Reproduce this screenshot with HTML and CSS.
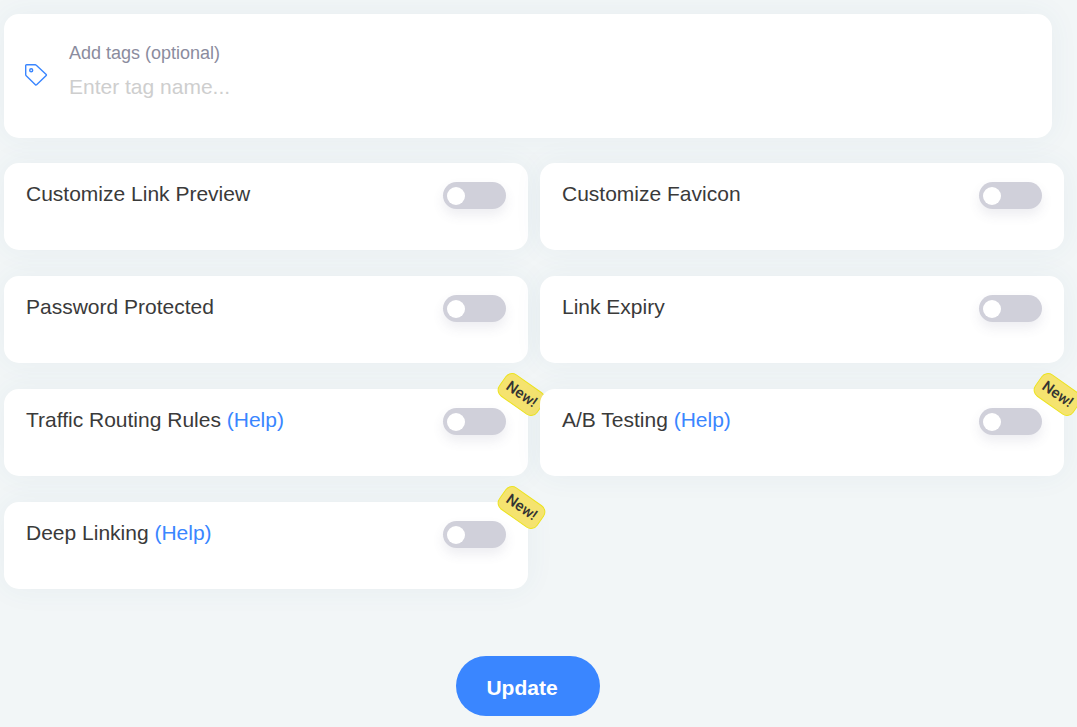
FILE: index.html
```html
<!DOCTYPE html>
<html lang="en">
<head>
<meta charset="utf-8">
<meta name="viewport" content="width=device-width, initial-scale=1">
<title>Link settings</title>
<link rel="stylesheet" href="styles.css">
</head>
<body>
<form class="settings">
  <div class="card tags">
    <svg class="tags-icon" viewBox="0 0 24 24" aria-hidden="true">
      <path d="M2.6 1.7H11.2Q11.8 1.7 12.3 2.2L22.2 11.4Q22.7 12 22.2 12.6L12.6 21.8Q12 22.4 11.4 21.8L2.2 12.8Q1.7 12.3 1.7 11.6V2.6Q1.7 1.7 2.6 1.7Z"/>
      <circle cx="7.2" cy="7.2" r="1.5"/>
    </svg>
    <div class="tags-field">
      <label class="tags-label" for="tags">Add tags (optional)</label>
      <input class="tags-input" id="tags" type="text" placeholder="Enter tag name...">
    </div>
  </div>

  <div class="options">
    <div class="card option">
      <label class="option-label" for="preview">Customize Link Preview</label>
      <input class="switch" id="preview" type="checkbox">
    </div>
    <div class="card option">
      <label class="option-label" for="favicon">Customize Favicon</label>
      <input class="switch" id="favicon" type="checkbox">
    </div>
    <div class="card option">
      <label class="option-label" for="password">Password Protected</label>
      <input class="switch" id="password" type="checkbox">
    </div>
    <div class="card option">
      <label class="option-label" for="expiry">Link Expiry</label>
      <input class="switch" id="expiry" type="checkbox">
    </div>
    <div class="card option">
      <div class="option-label"><label for="routing">Traffic Routing Rules</label> <a class="help" href="#routing">(Help)</a></div>
      <input class="switch" id="routing" type="checkbox">
      <span class="badge">New!</span>
    </div>
    <div class="card option">
      <div class="option-label"><label for="testing">A/B Testing</label> <a class="help" href="#testing">(Help)</a></div>
      <input class="switch" id="testing" type="checkbox">
      <span class="badge">New!</span>
    </div>
    <div class="card option">
      <div class="option-label"><label for="deep">Deep Linking</label> <a class="help" href="#deep">(Help)</a></div>
      <input class="switch" id="deep" type="checkbox">
      <span class="badge">New!</span>
    </div>
  </div>

  <button class="update" type="submit">Update</button>
</form>
</body>
</html>
```

FILE: styles.css
```css
* {
  box-sizing: border-box;
}

body {
  margin: 0;
  overflow-x: hidden;
  background: #f2f6f7;
  color: #3a3a3a;
  font: 21px/24px "Liberation Sans", Arial, sans-serif;
}

.settings {
  display: flex;
  flex-direction: column;
  padding: 14px 13px 11px 4px;
}

.card {
  position: relative;
  border-radius: 15px;
  background: #fff;
  box-shadow: 0 0 30px rgba(50, 100, 140, 0.06);
}

.tags {
  display: flex;
  align-items: center;
  gap: 21px;
  margin: 0 12px 25px 0;
  padding: 28px 20px 36px;
}

.tags-icon {
  flex: none;
  width: 24px;
  height: 24px;
  margin-top: 6px;
  fill: none;
  stroke: #3a86ff;
  stroke-width: 1.4;
}

.tags-field {
  display: flex;
  flex: 1;
  flex-direction: column;
  gap: 8px;
}

.tags-label {
  color: #8b8c9e;
  font-size: 18px;
  line-height: 22px;
}

.tags-input {
  width: 100%;
  height: 30px;
  padding: 0;
  border: 0;
  outline: 0;
  background: none;
  color: inherit;
  font: inherit;
}

.tags-input::placeholder {
  color: #cecece;
  opacity: 1;
}

.options {
  display: grid;
  grid-template-columns: 1fr 1fr;
  gap: 26px 12px;
}

.option {
  display: flex;
  align-items: flex-start;
  justify-content: space-between;
  min-height: 87px;
  padding: 19px 22px;
}

.help {
  color: #3a86ff;
  text-decoration: none;
}

.switch {
  position: relative;
  flex: none;
  width: 63px;
  height: 27px;
  margin: 0;
  border-radius: 14px;
  appearance: none;
  background: #d0d0da;
  box-shadow: 0 6px 12px rgba(80, 80, 120, 0.1);
  cursor: pointer;
}

.switch::before {
  content: "";
  position: absolute;
  top: 5px;
  left: 4px;
  width: 18px;
  height: 18px;
  border-radius: 50%;
  background: #fff;
}

.switch:checked {
  background: #3a86ff;
}

.switch:checked::before {
  left: 40px;
}

.badge {
  position: absolute;
  top: -8px;
  right: -17px;
  width: 47px;
  height: 27px;
  border: 1px solid #ece31f;
  border-radius: 8px;
  background: #f5e36f;
  color: #333;
  font: 500 15px/25px Roboto, sans-serif;
  text-align: center;
  transform: rotate(35deg);
}

.update {
  align-self: center;
  height: 60px;
  margin: 67px 12px 0 0;
  padding: 3px 42px 0 30px;
  border: 0;
  border-radius: 30px;
  background: #3a86ff;
  color: #fff;
  font: bold 21px/24px "Liberation Sans", Arial, sans-serif;
  cursor: pointer;
}
```
